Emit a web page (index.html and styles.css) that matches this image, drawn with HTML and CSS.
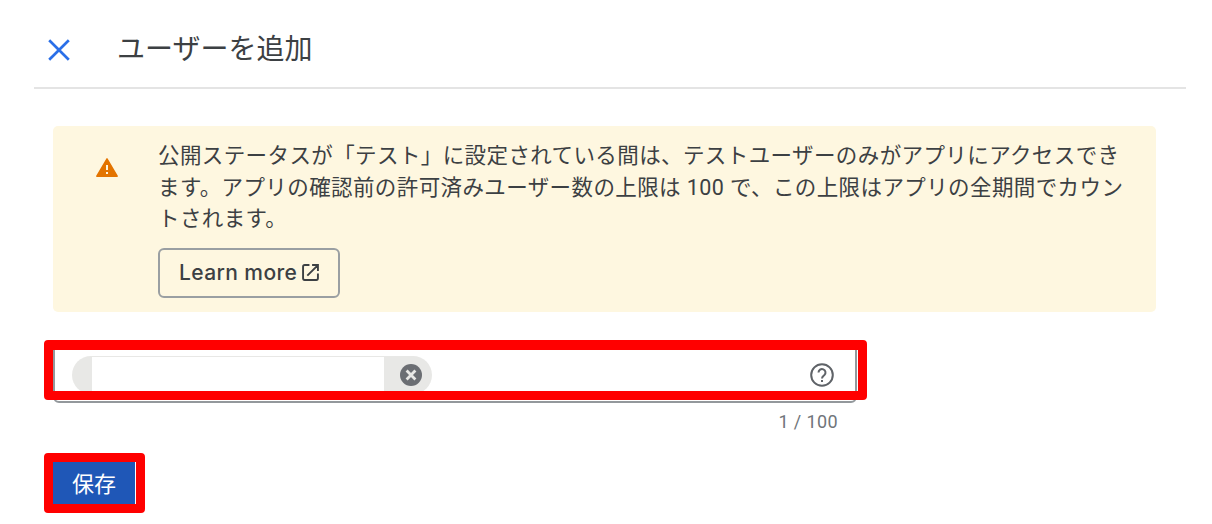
FILE: index.html
```html
<!DOCTYPE html>
<html lang="ja">
<head>
  <meta charset="UTF-8">
  <meta name="viewport" content="width=device-width, initial-scale=1.0">
  <title>ユーザーを追加</title>
  <link rel="stylesheet" href="styles.css">
</head>
<body>

  <header class="panel-header">
    <svg class="close-icon" viewBox="0 0 22 22"><path d="M1.2 1.2L20.8 20.8M20.8 1.2L1.2 20.8"/></svg>
    <h1>ユーザーを追加</h1>
  </header>

  <main class="content">
    <section class="notice">
      <svg class="warning-icon" viewBox="0 0 22 19">
        <path d="M11 .8L21.2 18.2H.8Z" fill="#e37400" stroke="#e37400" stroke-width="1.4" stroke-linejoin="round"/>
        <path d="M10 7h2v5h-2zM10 14h2v2h-2z" fill="#fef7e0"/>
      </svg>
      <div class="notice-body">
        <p>公開ステータスが「テスト」に設定されている間は、テストユーザーのみがアプリにアクセスでき<br>ます。アプリの確認前の許可済みユーザー数の上限は 100 で、この上限はアプリの全期間でカウン<br>トされます。</p>
        <button class="learn-more">Learn more
          <svg viewBox="0 0 16 16"><path d="M7 1H2.5Q1 1 1 2.5v11Q1 15 2.5 15h11q1.5 0 1.5-1.5V9M9.5 1H15v5.5M15 1L5 11"/></svg>
        </button>
      </div>
    </section>

    <div class="field-wrap">
      <div class="field">
        <div class="chip">
          <span class="chip-text"></span>
          <svg class="chip-remove" viewBox="0 0 22 22">
            <circle cx="11" cy="11" r="11" fill="#6b6e73"/>
            <path d="M6.6 6.6l8.8 8.8M15.4 6.6l-8.8 8.8" stroke="#e8e8e6" stroke-width="2.8"/>
          </svg>
        </div>
        <svg class="help-icon" viewBox="0 0 24 24">
          <circle cx="12" cy="12" r="10.8"/>
          <path d="M8.5 9.6a3.5 3.5 0 1 1 5.9 2.5c-1.3 1.1-2.4 1.7-2.4 3.4M12 17.1v2"/>
        </svg>
      </div>
      <div class="highlight"></div>
    </div>
    <div class="counter">1 / 100</div>

    <div class="save-wrap">
      <button class="save">保存</button>
      <div class="highlight"></div>
    </div>
  </main>

</body>
</html>
```
FILE: styles.css
```css
body {
  margin: 0;
  min-height: 524px;
  background-color: #fff;
  color: #3c4043;
  font-family: Roboto, "Noto Sans CJK JP", sans-serif;
}
svg {
  display: block;
  flex-shrink: 0;
}
button {
  font-family: inherit;
  cursor: pointer;
}
.panel-header {
  display: flex;
  align-items: center;
  height: 77px;
  margin: 0 26px 0 34px;
  padding: 10px 0 0 14px;
  border-bottom: 2px solid #e4e4e4;
}
.close-icon {
  width: 22px;
  height: 22px;
  margin-top: 2px;
  fill: none;
  stroke: #2a6fe8;
  stroke-width: 2.7;
}
h1 {
  margin: 2px 0 0 47px;
  font-size: 28px;
  font-weight: 400;
  line-height: 40px;
}
.content {
  padding: 37px 56px 0 53px;
}

/* Warning notice */
.notice {
  display: flex;
  align-items: flex-start;
  height: 186px;
  box-sizing: border-box;
  padding: 14px 0 0 43px;
  border-radius: 5px;
  background-color: #fef7e0;
}
.warning-icon {
  width: 22px;
  height: 19px;
  margin: 18px 40px 0 0;
}
.notice-body p {
  margin: 0;
  font-size: 21.5px;
  letter-spacing: 0.4px;
  line-height: 31.5px;
  white-space: nowrap;
}
.learn-more {
  display: flex;
  align-items: center;
  gap: 5px;
  height: 50px;
  margin-top: 13px;
  padding: 0 19px;
  border: 2px solid #9a9fa2;
  border-radius: 6px;
  background: none;
  color: #3c4043;
  font-family: Inter, sans-serif;
  font-size: 21px;
  font-weight: 500;
  letter-spacing: 0.4px;
}
.learn-more svg {
  width: 17px;
  height: 17px;
  fill: none;
  stroke: #3c4043;
  stroke-width: 1.8;
}

/* Email field */
.field-wrap {
  position: relative;
  width: 804px;
  margin-top: 31px;
}
.field {
  display: flex;
  align-items: flex-start;
  justify-content: space-between;
  height: 60px;
  box-sizing: border-box;
  padding: 11px 21px 0 17px;
  border: 2px solid #93989c;
  border-radius: 6px;
}
.chip {
  display: flex;
  align-items: center;
  width: 360px;
  height: 38px;
  box-sizing: border-box;
  padding: 1px 10px 0 20px;
  border-radius: 19px;
  background-color: #e8e8e6;
}
.chip-text {
  width: 292px;
  height: 37px;
  margin-right: 16px;
  background-color: #fff;
}
.chip-remove {
  width: 22px;
  height: 22px;
  margin-top: -2px;
}
.help-icon {
  width: 24px;
  height: 24px;
  margin-top: 7px;
  fill: none;
  stroke: #5f6368;
  stroke-width: 2;
}
.counter {
  width: 785px;
  margin-top: 8px;
  color: #70757a;
  font-size: 18px;
  letter-spacing: 0.4px;
  line-height: 22px;
  text-align: right;
}

/* Save button */
.save-wrap {
  position: relative;
  width: 83px;
  margin-top: 27px;
}
.save {
  display: block;
  width: 82px;
  height: 46px;
  padding: 0 0 2px;
  border: 0;
  background-color: #1f57b7;
  color: #fff;
  font-size: 22px;
}

/* Red frames over the controls */
.highlight {
  position: absolute;
  border: 9px solid #f00;
  border-radius: 4px;
}
.field-wrap .highlight {
  border-top-width: 10px;
  inset: -3px -10px 3px -9px;
}
.save-wrap .highlight {
  inset: -7px -9px -7px -9px;
}
```
